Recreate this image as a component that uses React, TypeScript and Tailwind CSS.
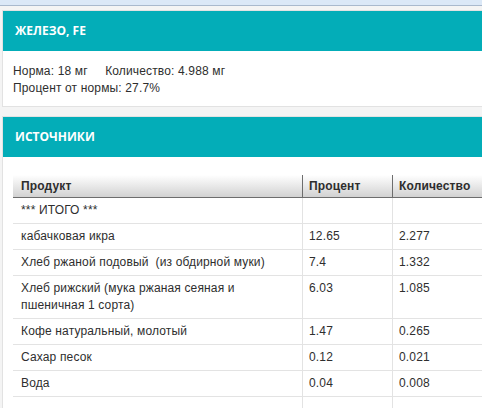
import React from "react";

const rows: [string, string, string][] = [
  ["*** ИТОГО ***", "", ""],
  ["кабачковая икра", "12.65", "2.277"],
  ["Хлеб ржаной подовый\u00a0 (из обдирной муки)", "7.4", "1.332"],
  ["Хлеб рижский (мука ржаная сеяная и пшеничная 1 сорта)", "6.03", "1.085"],
  ["Кофе натуральный, молотый", "1.47", "0.265"],
  ["Сахар песок", "0.12", "0.021"],
  ["Вода", "0.04", "0.008"],
  ["", "", ""],
];

export default function App() {
  return (
    <div
      className="w-[482px] h-[408px] overflow-hidden bg-[#f4f4f4] text-[12px] text-[#2e2e2e] tracking-[0.15px]"
      style={{ fontFamily: '"Liberation Sans", Arial, sans-serif' }}
    >
      <div className="h-[6px] bg-[#dbe8f7] border-b border-[#a9b9cd]" />
      <div className="pl-[2px] pt-[4px]">
        <div className="w-[540px] border border-[#e2e2e2] bg-white">
          <div
            className="h-[40px] bg-[#03adb8] flex items-center pl-[12px] text-white font-bold text-[12px] tracking-normal"
            style={{ fontFamily: '"Open Sans", sans-serif' }}
          >
            ЖЕЛЕЗО, FE
          </div>
          <div className="pl-[10px] pt-[12px] pb-[9px] leading-[17px]">
            <div>Норма: 18 мг&nbsp;&nbsp;&nbsp;&nbsp; Количество: 4.988 мг</div>
            <div>Процент от нормы: 27.7%</div>
          </div>
        </div>
        <div className="mt-[9px] w-[540px] border border-[#e2e2e2] bg-white">
          <div
            className="h-[40px] bg-[#03adb8] flex items-center pl-[12px] text-white font-bold text-[12px] tracking-normal"
            style={{ fontFamily: '"Open Sans", sans-serif' }}
          >
            ИСТОЧНИКИ
          </div>
          <div className="pl-[10px] pt-[18px]">
            <div className="grid grid-cols-[289px_90px_140px]">
              <div className="h-[23px] flex items-center pl-[8px] font-bold bg-linear-to-b from-white to-[#d2d2d2] border-b border-[#6d6d6d]">
                Продукт
              </div>
              <div className="h-[23px] flex items-center pl-[6px] font-bold bg-linear-to-b from-white to-[#d2d2d2] border-b border-l border-[#6d6d6d]">
                Процент
              </div>
              <div className="h-[23px] flex items-center pl-[6px] font-bold bg-linear-to-b from-white to-[#d2d2d2] border-b border-l border-[#6d6d6d]">
                Количество
              </div>
              {rows.map((r, i) => (
                <React.Fragment key={i}>
                  <div className="pl-[8px] pr-[6px] py-[4px] leading-[17px] min-h-[26px] border-b border-[#e3e3e3]">
                    {r[0]}
                  </div>
                  <div className="pl-[6px] py-[4px] leading-[17px] min-h-[26px] border-b border-l border-[#e3e3e3]">
                    {r[1]}
                  </div>
                  <div className="pl-[6px] py-[4px] leading-[17px] min-h-[26px] border-b border-l border-[#e3e3e3]">
                    {r[2]}
                  </div>
                </React.Fragment>
              ))}
            </div>
          </div>
        </div>
      </div>
    </div>
  );
}
